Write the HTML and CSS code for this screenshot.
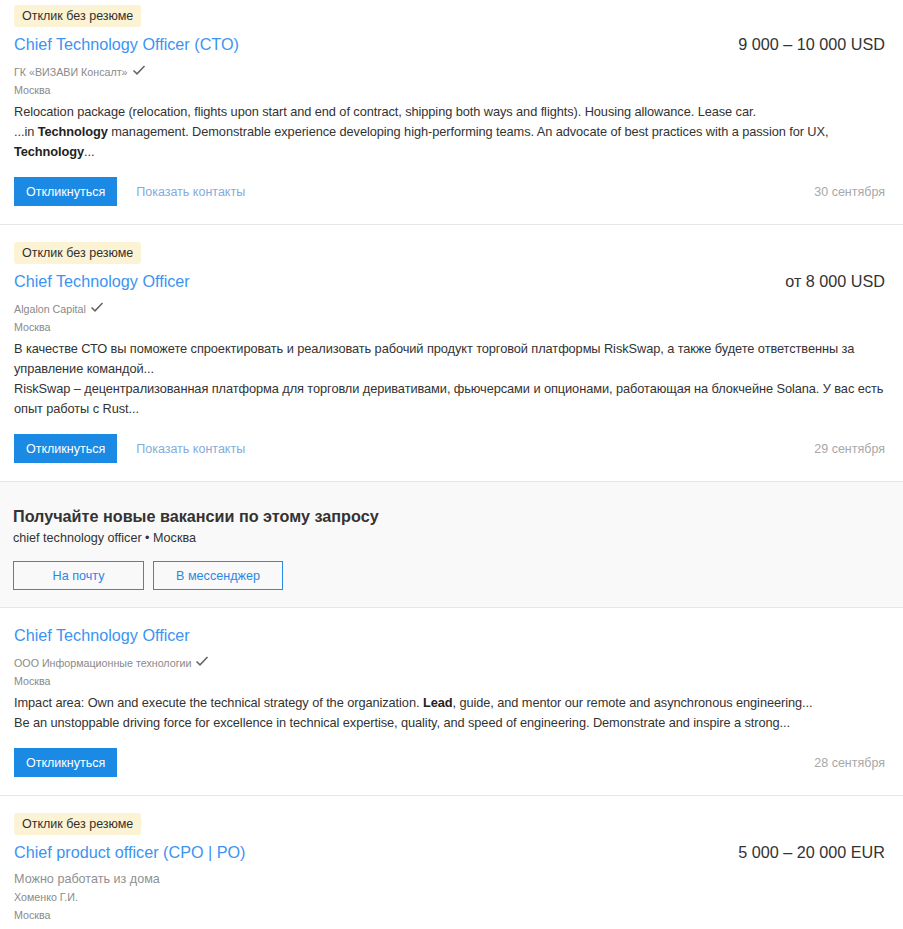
FILE: index.html
```html
<!DOCTYPE html>
<html lang="ru">
<head>
<meta charset="utf-8">
<link rel="stylesheet" href="styles.css">
</head>
<body>
<div class="list">
  <div class="card card-first">
    <span class="tag">Отклик без резюме</span>
    <div class="head">
      <a class="title" href="#">Chief Technology Officer (CTO)</a>
      <span class="salary">9 000 – 10 000 USD</span>
    </div>
    <div class="company">ГК «ВИЗАВИ Консалт» <svg class="check" viewBox="0 0 14 12" width="14" height="12"><path d="M1.5 6.5 L5 9.8 L12.5 2" fill="none" stroke="#666" stroke-width="1.6"/></svg></div>
    <div class="city">Москва</div>
    <div class="desc">
      <p>Relocation package (relocation, flights upon start and end of contract, shipping both ways and flights). Housing allowance. Lease car.</p>
      <p>...in <b>Technology</b> management. Demonstrable experience developing high-performing teams. An advocate of best practices with a passion for UX, <b>Technology</b>...</p>
    </div>
    <div class="actions">
      <button class="btn">Откликнуться</button>
      <a class="contacts" href="#">Показать контакты</a>
      <span class="date">30 сентября</span>
    </div>
  </div>

  <div class="card">
    <span class="tag">Отклик без резюме</span>
    <div class="head">
      <a class="title" href="#">Chief Technology Officer</a>
      <span class="salary">от 8 000 USD</span>
    </div>
    <div class="company">Algalon Capital <svg class="check" viewBox="0 0 14 12" width="14" height="12"><path d="M1.5 6.5 L5 9.8 L12.5 2" fill="none" stroke="#666" stroke-width="1.6"/></svg></div>
    <div class="city">Москва</div>
    <div class="desc">
      <p>В качестве СТО вы поможете спроектировать и реализовать рабочий продукт торговой платформы RiskSwap, а также будете ответственны за управление командой...</p>
      <p>RiskSwap – децентрализованная платформа для торговли деривативами, фьючерсами и опционами, работающая на блокчейне Solana. У вас есть опыт работы с Rust...</p>
    </div>
    <div class="actions">
      <button class="btn">Откликнуться</button>
      <a class="contacts" href="#">Показать контакты</a>
      <span class="date">29 сентября</span>
    </div>
  </div>

  <div class="subscribe">
    <div class="sub-title">Получайте новые вакансии по этому запросу</div>
    <div class="sub-query">chief technology officer • Москва</div>
    <div class="sub-buttons">
      <button class="btn-outline btn-mail">На почту</button>
      <button class="btn-outline btn-msg">В мессенджер</button>
    </div>
  </div>

  <div class="card card-notag">
    <div class="head">
      <a class="title" href="#">Chief Technology Officer</a>
    </div>
    <div class="company">ООО Информационные технологии <svg class="check" viewBox="0 0 14 12" width="14" height="12"><path d="M1.5 6.5 L5 9.8 L12.5 2" fill="none" stroke="#666" stroke-width="1.6"/></svg></div>
    <div class="city">Москва</div>
    <div class="desc">
      <p>Impact area: Own and execute the technical strategy of the organization. <b>Lead</b>, guide, and mentor our remote and asynchronous engineering...</p>
      <p>Be an unstoppable driving force for excellence in technical expertise, quality, and speed of engineering. Demonstrate and inspire a strong...</p>
    </div>
    <div class="actions">
      <button class="btn">Откликнуться</button>
      <span class="date">28 сентября</span>
    </div>
  </div>

  <div class="card">
    <span class="tag">Отклик без резюме</span>
    <div class="head">
      <a class="title" href="#">Chief product officer (CPO | PO)</a>
      <span class="salary">5 000 – 20 000 EUR</span>
    </div>
    <div class="remote">Можно работать из дома</div>
    <div class="company">Хоменко Г.И.</div>
    <div class="city">Москва</div>
  </div>
</div>
</body>
</html>
```

FILE: styles.css
```css
* { box-sizing: border-box; }
html, body { margin: 0; padding: 0; background: #fff; }
body {
  font-family: "Liberation Sans", Arial, sans-serif;
  color: #333;
  width: 903px;
  overflow: hidden;
}
.list { display: flex; flex-direction: column; }
.card {
  padding: 17px 18px 18px 14px;
  border-bottom: 1px solid #e6e6e6;
  display: flex;
  flex-direction: column;
  align-items: flex-start;
}
.card-first { padding-top: 5px; }
.card-notag { padding-top: 16px; }
.tag {
  display: inline-block;
  height: 22px;
  line-height: 22px;
  padding: 0 8px;
  background: #fcf3d4;
  border-radius: 3px;
  font-size: 12.5px;
  color: #303030;
}
.head {
  margin-top: 6px;
  width: 100%;
  display: flex;
  justify-content: space-between;
  align-items: center;
  height: 22px;
}
.card-notag .head { margin-top: 0; }
.title {
  color: #3c93f2;
  text-decoration: none;
  font-size: 16.2px;
  line-height: 22px;
}
.salary {
  font-size: 16.2px;
  line-height: 22px;
  color: #333;
}
.company {
  margin-top: 8px;
  font-size: 10.7px;
  line-height: 18px;
  color: #8a8a8a;
  display: flex;
  align-items: center;
  gap: 4px;
}
.check { display: block; margin-top: -4px; }
.city {
  font-size: 10.7px;
  line-height: 18px;
  color: #8a8a8a;
}
.remote {
  margin-top: 6px;
  font-size: 12.6px;
  line-height: 20px;
  color: #909090;
}
.remote + .company { margin-top: -1px; }
.desc {
  align-self: stretch;
  margin-top: 3px;
  font-size: 12.8px;
  line-height: 20px;
  letter-spacing: -0.08px;
  color: #333;
}
.desc p { margin: 0; }
.desc b { font-weight: bold; color: #222; }
.actions {
  margin-top: 15px;
  width: 100%;
  display: flex;
  align-items: center;
}
.btn {
  height: 29px;
  padding: 0 12px;
  border: 0;
  border-radius: 0;
  background: #1a8ae5;
  color: #fff;
  font-family: "Liberation Sans", Arial, sans-serif;
  font-size: 12.5px;
  cursor: pointer;
}
.contacts {
  margin-left: 19px;
  font-size: 12.5px;
  color: #85abdc;
  text-decoration: none;
}
.date {
  margin-left: auto;
  font-size: 12.5px;
  color: #a8a8a8;
}
.subscribe {
  background: #f9f9f9;
  padding: 24px 18px 17px 13px;
  border-bottom: 1px solid #e6e6e6;
}
.sub-title {
  font-size: 16.2px;
  line-height: 20px;
  font-weight: bold;
  color: #333;
}
.sub-query {
  margin-top: 2px;
  font-size: 12.6px;
  line-height: 20px;
  color: #333;
}
.sub-buttons {
  margin-top: 13px;
  display: flex;
  gap: 9px;
}
.btn-outline {
  height: 29px;
  background: transparent;
  border: 1px solid #2a8ae4;
  color: #2a88e4;
  font-family: "Liberation Sans", Arial, sans-serif;
  font-size: 12.6px;
  padding: 0;
}
.btn-mail { width: 131px; }
.btn-msg { width: 130px; }
```
